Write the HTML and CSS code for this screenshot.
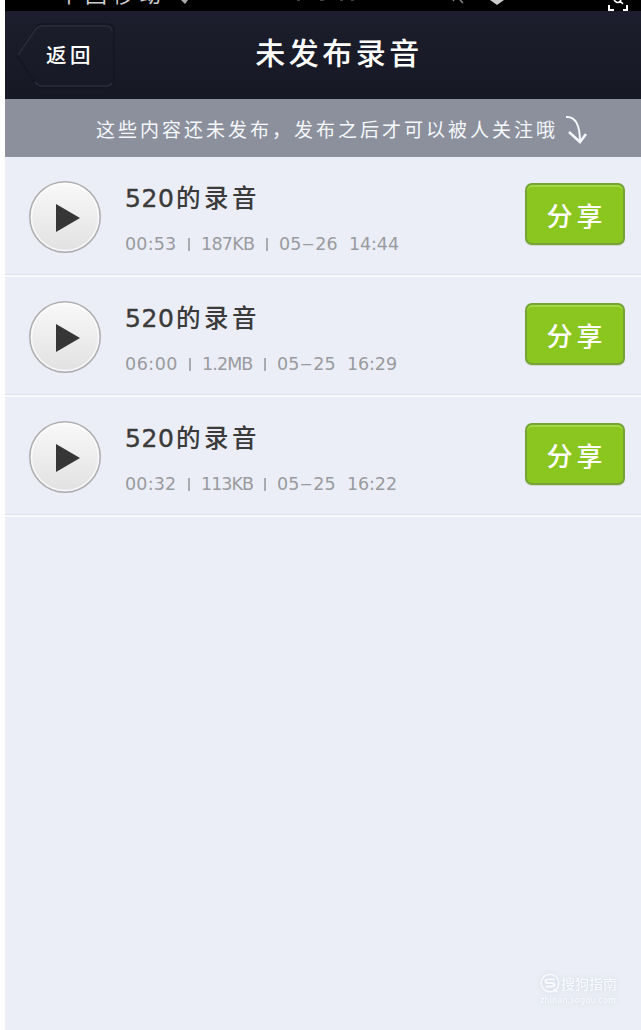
FILE: index.html
```
<!DOCTYPE html>
<html lang="zh-CN">
<head>
<meta charset="utf-8">
<title>未发布录音</title>
<link rel="stylesheet" href="styles.css">
</head>
<body>
<div class="screen">
  <div class="status">
    <span class="carrier">中国移动</span>
    <svg class="status-marks" width="340" height="11" viewBox="170 0 340 11"><path d="M181 0h7l-3 4z" fill="#aaa"/><path d="M297 0h3M320 0h4M340 0h3M351 0h3" stroke="#555" stroke-width="1.5"/><path d="M453 0l1 1M460 0l3 3" stroke="#888" stroke-width="1.5"/><path d="M490 0h14l-7 5z" fill="#ccc"/></svg>
    <svg class="scan" width="24" height="13" viewBox="0 0 24 13" fill="none" stroke="#fff" stroke-width="2"><path d="M2 5v5h5M16 10h4V5"/><path d="M7 0q4 5 7 0M13 1l3 3" stroke-width="1.6"/></svg>
  </div>
  <header class="header">
    <a class="back">
      <svg class="back-shape" width="100" height="66" viewBox="0 0 100 66" fill="none"><path d="M1 33 19 6q3-5 8-5h64q7 0 7 7v50q0 7-7 7H27q-5 0-8-5z" stroke="#141622" stroke-width="1.5"/><path d="M2 32 19 7q3-4 7-4h64q5 0 6 5M19 59q3 4 7 4h64q4 0 6-3" stroke="#2b2c3b" stroke-width="1.5"/></svg>
      <span class="back-label">返回</span>
    </a>
    <h1 class="title">未发布录音</h1>
  </header>
  <div class="notice">
    <span class="notice-text">这些内容还未发布，发布之后才可以被人关注哦</span>
    <svg class="arrow" width="24" height="30" viewBox="0 0 24 30" fill="none" stroke="#f4f6fa"><path d="M1 2C11 1 15 11 15 27" stroke-width="2"/><path d="M4 17l11 10 6-8" stroke-width="2.600"/></svg>
  </div>
  <ul class="list">
    <li class="item">
      <svg class="play" width="72" height="72" viewBox="0 0 72 72"><defs><linearGradient id="face" x2="0" y2="1"><stop stop-color="#f9f9f9"/><stop offset="1" stop-color="#e1e1e1"/></linearGradient></defs><circle cx="36" cy="36" r="35.200" fill="url(#face)" stroke="#adafb1" stroke-width="1.600"/><circle cx="36" cy="36" r="33.5" fill="none" stroke="#fff" stroke-opacity=".7" stroke-width="1.5"/><path d="M27 23 51 37 27 51z" fill="#363636"/></svg>
      <div class="info"><div class="name"><span class="num">520</span>的录音</div><div class="meta"><span class="dur">00:53</span><i class="bar"></i><span class="size">187KB</span><i class="bar"></i><span class="date">05<span class="dash">–</span>26</span><span class="time">14:44</span></div></div>
      <button class="share">分享</button>
    </li>
    <li class="item">
      <svg class="play" width="72" height="72" viewBox="0 0 72 72"><circle cx="36" cy="36" r="35.200" fill="url(#face)" stroke="#adafb1" stroke-width="1.600"/><circle cx="36" cy="36" r="33.5" fill="none" stroke="#fff" stroke-opacity=".7" stroke-width="1.5"/><path d="M27 23 51 37 27 51z" fill="#363636"/></svg>
      <div class="info"><div class="name"><span class="num">520</span>的录音</div><div class="meta"><span class="dur wide">06:00</span><i class="bar"></i><span class="size mb">1.2MB</span><i class="bar"></i><span class="date">05<span class="dash">–</span>25</span><span class="time">16:29</span></div></div>
      <button class="share">分享</button>
    </li>
    <li class="item">
      <svg class="play" width="72" height="72" viewBox="0 0 72 72"><circle cx="36" cy="36" r="35.200" fill="url(#face)" stroke="#adafb1" stroke-width="1.600"/><circle cx="36" cy="36" r="33.5" fill="none" stroke="#fff" stroke-opacity=".7" stroke-width="1.5"/><path d="M27 23 51 37 27 51z" fill="#363636"/></svg>
      <div class="info"><div class="name"><span class="num">520</span>的录音</div><div class="meta"><span class="dur">00:32</span><i class="bar"></i><span class="size kb">113KB</span><i class="bar"></i><span class="date">05<span class="dash">–</span>25</span><span class="time">16:22</span></div></div>
      <button class="share">分享</button>
    </li>
  </ul>
  <div class="watermark">
    <div class="brand"><svg width="20" height="20" viewBox="0 0 20 20" fill="none" stroke="#fafbfe"><circle cx="10" cy="10" r="8.8" stroke-width="1.4"/><path d="M14.500 6.500H8q-2.500 0-2.500 1.800T8 10h4q2.500 0 2.500 1.800T12 13.500H5.500M14 16l3 3" stroke-width="2.200"/></svg><span>搜狗指南</span></div>
    <div class="site">zhinan.sogou.com</div>
  </div>
</div>
</body>
</html>
```
FILE: styles.css
```
* { box-sizing: border-box; }
body { margin: 0; background: #fff; font-family: "Noto Sans CJK SC", sans-serif; }
.screen { position: relative; display: flex; flex-direction: column; margin-left: 5px; height: 1030px; overflow: hidden; background: #ebeef6; }
.status { position: relative; display: flex; flex: none; height: 11px; background: #000; color: #ccc; }
.carrier { margin: -21px 0 0 53px; height: 26px; font-size: 22px; line-height: 26px; letter-spacing: 5px; white-space: nowrap; }
.status-marks { position: absolute; left: 165px; top: 0; }
.scan { position: absolute; left: 602px; top: 0; z-index: 1; }
.header { position: relative; display: flex; flex: none; align-items: center; justify-content: center; height: 88px; background: linear-gradient(#1d1e2d, #161824); color: #fff; }
.back { position: absolute; left: 11px; top: 12px; display: flex; width: 100px; height: 66px; }
.back-shape { position: absolute; left: 0; top: 0; }
.back-label { position: relative; padding-left: 30px; font-size: 20.500px; font-weight: 500; line-height: 62px; letter-spacing: 3.500px; }
.title { margin: 0 0 9px 32px; font-size: 30px; font-weight: 500; letter-spacing: 3.500px; line-height: 44px; }
.notice { display: flex; flex: none; align-items: center; height: 58px; padding-left: 91px; background: #8b909c; color: #f6f8fc; }
.notice-text { font-size: 19px; letter-spacing: 3px; line-height: 30px; padding-top: 1px; white-space: nowrap; }
.arrow { margin: 4px 0 0 7px; flex: none; }
.list { margin: 0; padding: 0; list-style: none; }
.item { display: flex; height: 120px; padding: 24px 16px 0 24px; background: linear-gradient(#dfe2e8, #dfe2e8) 0 117px / 100% 1px no-repeat, linear-gradient(#f8f9fc, #f8f9fc) 0 118px / 100% 2px no-repeat; }
.play { flex: none; }
.info { flex: 1; padding-left: 24px; }
.name { display: flex; height: 36px; color: #3b3b3b; font-size: 24.500px; font-weight: 500; letter-spacing: 3.500px; line-height: 31px; }
.num { width: 51px; font-size: 25px; line-height: 35px; font-family: "DejaVu Sans", sans-serif; letter-spacing: .6px; font-weight: 400; -webkit-text-stroke: .4px #3b3b3b; }
.meta { display: flex; align-items: center; height: 24px; margin-top: 15px; color: #999b9f; font: 17.500px/24px "DejaVu Sans", sans-serif; white-space: nowrap; }
.bar { width: 2px; height: 13px; margin: 0 11px; background: #a9abb0; }
.dur { width: 52px; letter-spacing: .2px; }
.wide { width: 53px; letter-spacing: .5px; }
.size { width: 54px; letter-spacing: -.7px; }
.mb { width: 51px; letter-spacing: -.900px; }
.kb { width: 52px; letter-spacing: -1px; }
.date { width: 70px; letter-spacing: 0; }
.dash { display: inline-block; width: 14px; text-align: center; transform: translateY(-1px) scaleX(1.4); }
.time { letter-spacing: -.1px; }
.share { width: 100px; height: 62px; margin-top: 2px; padding: 2px 0 0 3px; border: 2px solid #76a336; border-radius: 7px; background: #8bc620; box-shadow: inset 0 2px #a3da40, 0 1px 1px #d1d9d0; color: #fff; font: 500 26px/50px "Noto Sans CJK SC", sans-serif; letter-spacing: 4px; }
.watermark { position: absolute; left: 535px; top: 973px; color: #fafbfe; filter: drop-shadow(0 0 2px #cdd4e3); }
.brand { display: flex; gap: 1px; height: 23px; font-size: 14px; line-height: 20px; }
.site { font: 8px/10px "DejaVu Sans", sans-serif; letter-spacing: .2px; }
```
